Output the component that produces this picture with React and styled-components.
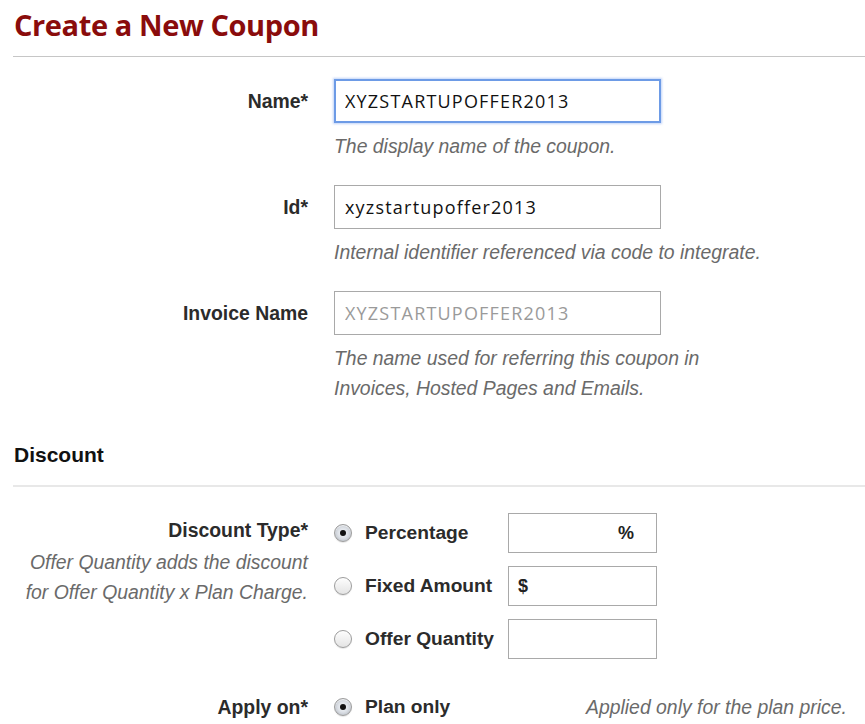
import React from "react";
import styled, { createGlobalStyle, css } from "styled-components";

const Global = createGlobalStyle`
  html, body { margin: 0; padding: 0; background: #fff; }
  body { font-family: "Liberation Sans", Arial, sans-serif; color: #2b2b2b; }
  * { box-sizing: border-box; }
`;

const Page = styled.div`
  padding-left: 13px;
  width: 865px;
`;

const Header = styled.div`
  padding: 7px 0 13px 1px;
  border-bottom: 1px solid #c6c6c6;
`;

const Title = styled.h1`
  margin: 0;
  font-family: "Open Sans", "Noto Sans", sans-serif;
  font-weight: 700;
  font-size: 29px;
  line-height: 36px;
  letter-spacing: -0.4px;
  color: #8a0c0c;
`;

const Form = styled.div`
  display: grid;
  grid-template-columns: 295px 1fr;
  column-gap: 26px;
  row-gap: 24px;
  margin-top: 22px;
`;

const Label = styled.div`
  display: flex;
  align-items: center;
  justify-content: flex-end;
  height: ${(p) => p.$h || 44}px;
  font-weight: 700;
  font-size: 19.4px;
  color: #2b2b2b;
  white-space: nowrap;
`;

const Field = styled.div`
  display: flex;
  flex-direction: column;
`;

const TextInput = styled.input`
  width: 327px;
  height: 44px;
  padding: 0 10px;
  font-family: "Open Sans", "Noto Sans", sans-serif;
  font-size: 18px;
  letter-spacing: 1.2px;
  color: #111;
  background: #fff;
  border: 1px solid #a9a9a9;
  border-radius: 0;
  outline: none;
  &::placeholder { color: #9a9a9a; }
  ${(p) =>
    p.$focused &&
    css`
      padding-left: 9px;
      border: 2px solid #6d9be6;
      box-shadow: 0 0 2px 1px rgba(120, 160, 240, 0.45);
    `}
`;

const Hint = styled.div`
  margin-top: 8px;
  font-style: italic;
  font-size: 19.4px;
  line-height: 30px;
  color: #6a6a6a;
  max-width: ${(p) => (p.$narrow ? "400px" : "none")};
`;

const Section = styled.div`
  margin-top: 40px;
  padding: 0 0 18px 1px;
  border-bottom: 2px solid #e8e8e8;
`;

const SectionTitle = styled.h2`
  margin: 0;
  font-size: 21px;
  line-height: 24px;
  font-weight: 700;
  color: #111;
`;

const DiscountGrid = styled.div`
  display: grid;
  grid-template-columns: 295px 1fr;
  column-gap: 26px;
  margin-top: 26px;
`;

const LabelBlock = styled.div`
  text-align: right;
  padding-top: 2px;
`;

const BlockLabel = styled.div`
  font-weight: 700;
  font-size: 19.4px;
  line-height: 30px;
  color: #2b2b2b;
`;

const Desc = styled.div`
  margin-top: 2px;
  font-style: italic;
  font-size: 19.4px;
  line-height: 30px;
  color: #6a6a6a;
`;

const Options = styled.div`
  display: flex;
  flex-direction: column;
  gap: 13px;
`;

const OptionRow = styled.div`
  display: flex;
  align-items: center;
  height: 40px;
`;

const RadioLabel = styled.label`
  display: flex;
  align-items: center;
  gap: 13px;
  width: 174px;
  font-weight: 700;
  font-size: 19.2px;
  color: #2b2b2b;
  white-space: nowrap;
`;

const Radio = styled.span`
  position: relative;
  flex: none;
  width: 18px;
  height: 18px;
  border-radius: 50%;
  border: 1px solid #9c9c9c;
  background: ${(p) =>
    p.$checked
      ? "radial-gradient(circle at 50% 50%, #f4f6f9 0, #dde1e7 45%, #a9aeb6 100%)"
      : "linear-gradient(#fdfdfd, #e4e4e4)"};
  box-shadow: inset 0 1px 1px rgba(255,255,255,0.8), 0 1px 1px rgba(0,0,0,0.1);
  &::after {
    content: "";
    display: ${(p) => (p.$checked ? "block" : "none")};
    position: absolute;
    left: 50%;
    top: 50%;
    width: 6px;
    height: 6px;
    margin: -3px 0 0 -3px;
    border-radius: 50%;
    background: #111;
  }
`;

const Box = styled.div`
  position: relative;
  width: 149px;
  height: 40px;
`;

const SmallInput = styled.input`
  width: 100%;
  height: 100%;
  border: 1px solid #a9a9a9;
  border-radius: 0;
  outline: none;
  background: #fff;
  font-family: "Liberation Sans", Arial, sans-serif;
  font-size: 18px;
  padding: 0 ${(p) => (p.$suffix ? "30px" : "10px")} 0 ${(p) => (p.$prefix ? "26px" : "10px")};
`;

const Addon = styled.span`
  position: absolute;
  top: 0;
  bottom: 0;
  display: flex;
  align-items: center;
  font-size: 18px;
  font-weight: 700;
  color: #222;
  ${(p) => (p.$side === "left" ? "left: 10px;" : "right: 23px;")}
`;

const ApplyRow = styled.div`
  display: grid;
  grid-template-columns: 295px 1fr;
  column-gap: 26px;
  margin-top: 28px;
`;

const ApplyField = styled.div`
  display: flex;
  align-items: center;
  height: 40px;
`;

const SideHint = styled.span`
  margin-left: 78px;
  font-style: italic;
  font-size: 19.4px;
  color: #6a6a6a;
  white-space: nowrap;
`;

export default function App() {
  return (
    <>
      <Global />
      <Page>
        <Header>
          <Title>Create a New Coupon</Title>
        </Header>

        <Form>
          <Label>Name*</Label>
          <Field>
            <TextInput $focused defaultValue="XYZSTARTUPOFFER2013" />
            <Hint>The display name of the coupon.</Hint>
          </Field>

          <Label>Id*</Label>
          <Field>
            <TextInput defaultValue="xyzstartupoffer2013" />
            <Hint>Internal identifier referenced via code to integrate.</Hint>
          </Field>

          <Label>Invoice Name</Label>
          <Field>
            <TextInput placeholder="XYZSTARTUPOFFER2013" />
            <Hint $narrow>
              The name used for referring this coupon in Invoices, Hosted Pages and Emails.
            </Hint>
          </Field>
        </Form>

        <Section>
          <SectionTitle>Discount</SectionTitle>
        </Section>

        <DiscountGrid>
          <LabelBlock>
            <BlockLabel>Discount Type*</BlockLabel>
            <Desc>
              Offer Quantity adds the discount
              <br />
              for Offer Quantity x Plan Charge.
            </Desc>
          </LabelBlock>
          <Options>
            <OptionRow>
              <RadioLabel>
                <Radio $checked />
                Percentage
              </RadioLabel>
              <Box>
                <SmallInput $suffix />
                <Addon $side="right">%</Addon>
              </Box>
            </OptionRow>
            <OptionRow>
              <RadioLabel>
                <Radio />
                Fixed Amount
              </RadioLabel>
              <Box>
                <SmallInput $prefix />
                <Addon $side="left">$</Addon>
              </Box>
            </OptionRow>
            <OptionRow>
              <RadioLabel>
                <Radio />
                Offer Quantity
              </RadioLabel>
              <Box>
                <SmallInput />
              </Box>
            </OptionRow>
          </Options>
        </DiscountGrid>

        <ApplyRow>
          <Label $h={40}>Apply on*</Label>
          <ApplyField>
            <RadioLabel>
              <Radio $checked />
              Plan only
            </RadioLabel>
            <SideHint>Applied only for the plan price.</SideHint>
          </ApplyField>
        </ApplyRow>
      </Page>
    </>
  );
}
